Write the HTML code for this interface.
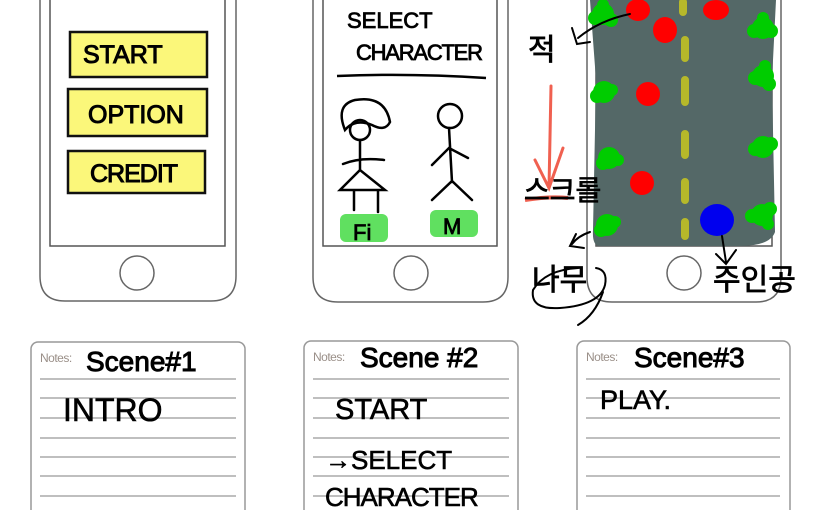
<!DOCTYPE html>
<html><head><meta charset="utf-8"><style>
html,body{margin:0;padding:0;background:#fff;}
svg{display:block}
.hw{font-family:"Liberation Sans","Noto Sans CJK KR",sans-serif;fill:#000;}
.ko{font-family:"Liberation Sans","Noto Sans CJK KR",sans-serif;}
</style></head><body>
<svg width="825" height="510" viewBox="0 0 825 510" xmlns="http://www.w3.org/2000/svg">
<g fill="none" stroke="#666" stroke-width="1.5">
  <path d="M40 0 V276 Q40 301 65 301 H211 Q236 301 236 276 V0"/>
  <path d="M50 0 V246 H225 V0" stroke="#555"/>
  <circle cx="137" cy="273" r="17"/>
  <path d="M313 0 V277 Q313 302 338 302 H483 Q508 302 508 277 V0"/>
  <path d="M323 0 V246 H497 V0" stroke="#555"/>
  <circle cx="411" cy="273" r="17"/>
  <path d="M587 0 V277 Q587 302 612 302 H756 Q781 302 781 277 V0"/>
  <path d="M596 0 V246 H772 V0" stroke="#555"/>
  <circle cx="684" cy="273" r="17"/>
</g>
<g stroke="#111" stroke-width="2.5" fill="#fbf77a">
  <rect x="70" y="32" width="137" height="45"/>
  <rect x="68" y="89" width="139" height="47"/>
  <rect x="68" y="151" width="137" height="42"/>
</g>
<g class="hw" font-size="25" stroke="#000" stroke-width="1">
  <text x="83" y="63">START</text>
  <text x="88" y="123">OPTION</text>
  <text x="90" y="182" letter-spacing="-1">CREDIT</text>
</g>
<g class="hw" font-size="22" stroke="#000" stroke-width="0.8">
  <text x="347" y="28">SELECT</text>
  <text x="356" y="60" letter-spacing="-1" textLength="126">CHARACTER</text>
</g>
<path d="M337 76 Q410 73 486 78" stroke="#000" stroke-width="2.5" fill="none"/>
<g stroke="#000" stroke-width="2.5" fill="none" stroke-linecap="round">
  <path d="M345 130 Q335 105 355 100 Q385 95 390 122 Q385 132 372 125 Q355 118 345 130 Z"/>
  <circle cx="360" cy="130" r="10"/>
  <path d="M360 140 V170 M343 164 Q360 157 384 160 M360 170 L340 190 H385 Z M354 190 V210 M378 190 V212"/>
  <circle cx="450" cy="116" r="12"/>
  <path d="M449 128 L452 182 M432 165 L449 148 L468 158 M432 200 L452 181 L472 200"/>
</g>
<rect x="340" y="214" width="48" height="28" rx="6" fill="#60e060"/>
<rect x="430" y="210" width="48" height="27" rx="6" fill="#60e060"/>
<g class="hw" font-size="22" stroke="#000" stroke-width="0.8"><text x="353" y="240">Fi</text><text x="443" y="234">M</text></g>
<path d="M590 0 H776 L772 80 L775 232 Q770 246 740 246 H600 Q592 246 593 230 L596 80 Z" fill="#546867"/>
<g stroke="#b6b82a" stroke-width="8" stroke-linecap="round">
  <path d="M683 2 V12 M685 40 V58 M685 80 V102 M685 134 V155 M685 182 V200 M685 222 V236"/>
</g>
<g fill="#ff0000">
  <ellipse cx="638" cy="10" rx="12" ry="11"/><ellipse cx="665" cy="30" rx="12" ry="13"/>
  <ellipse cx="716" cy="10" rx="13" ry="10"/><ellipse cx="648" cy="94" rx="12" ry="12"/>
  <ellipse cx="642" cy="183" rx="12" ry="12"/>
</g>
<ellipse cx="717" cy="220" rx="17" ry="16" fill="#0000ee"/>
<g fill="#00cc00">
  <g transform="translate(603,14)"><circle r="11"/><circle cx="-8" cy="4" r="7"/><circle cx="8" cy="6" r="7"/><circle cx="0" cy="-9" r="6"/></g>
  <g transform="translate(763,28)"><circle r="11"/><circle cx="-9" cy="3" r="7"/><circle cx="8" cy="3" r="7"/><circle cx="0" cy="-10" r="6"/></g>
  <g transform="translate(604,92)"><circle r="11"/><circle cx="-7" cy="4" r="7"/><circle cx="8" cy="-2" r="6"/></g>
  <g transform="translate(763,76)"><circle r="11"/><circle cx="-8" cy="2" r="7"/><circle cx="6" cy="8" r="7"/><circle cx="2" cy="-10" r="6"/></g>
  <g transform="translate(609,158)"><circle r="11"/><circle cx="-6" cy="5" r="7"/><circle cx="9" cy="2" r="6"/></g>
  <g transform="translate(763,147)"><circle r="11"/><circle cx="-8" cy="2" r="7"/><circle cx="8" cy="-3" r="7"/></g>
  <g transform="translate(607,225)"><circle r="11"/><circle cx="-6" cy="5" r="7"/><circle cx="8" cy="-3" r="6"/></g>
  <g transform="translate(762,215)"><circle r="11"/><circle cx="-10" cy="1" r="7"/><circle cx="8" cy="-6" r="7"/><circle cx="6" cy="9" r="6"/></g>
</g>
<g stroke="#000" stroke-width="2" fill="none" stroke-linecap="round">
  <path d="M630 14 Q600 20 578 38 M572 28 L577 44 L590 42"/>
  <path d="M590 232 Q578 236 572 244 M576 234 L570 246 L584 248"/>
  <path d="M722 236 L726 262 M716 254 L726 264 L736 250"/>
  <path d="M578 268 Q545 270 533 290 Q530 310 560 308 Q600 305 605 285 Q608 270 596 268 M603 292 Q595 315 578 325"/>
</g>
<path d="M551 86 L549 188 M535 160 L549 188 L563 148" stroke="#f06050" stroke-width="3" fill="none" stroke-linecap="round"/>
<path d="M525 200 Q550 196 568 198" stroke="#f06050" stroke-width="4" fill="none"/>
<g class="ko" font-size="30" fill="#000" stroke="#000" stroke-width="0.8">
  <text x="528" y="60">적</text>
  <text x="524" y="200" font-size="28">스크롤</text>
  <text x="532" y="290">나무</text>
  <text x="713" y="290">주인공</text>
</g>
<g>
  <rect x="31" y="342" width="214" height="180" rx="7" fill="#fff" stroke="#999" stroke-width="1.5"/>
  <rect x="304" y="341" width="214" height="180" rx="7" fill="#fff" stroke="#999" stroke-width="1.5"/>
  <rect x="577" y="341" width="213" height="180" rx="7" fill="#fff" stroke="#999" stroke-width="1.5"/>
</g>
<g stroke="#999" stroke-width="1.3">
  <path d="M40 379H236M40 398H236M40 418H236M40 438H236M40 457H236M40 476H236M40 496H236"/>
  <path d="M313 379H509M313 398H509M313 418H509M313 438H509M313 457H509M313 476H509M313 496H509"/>
  <path d="M586 379H780M586 398H780M586 418H780M586 438H780M586 457H780M586 476H780M586 496H780"/>
</g>
<g font-family="Liberation Sans,sans-serif" font-size="12" fill="#9a8f88" letter-spacing="-0.5">
  <text x="40" y="362">Notes:</text><text x="313" y="361">Notes:</text><text x="586" y="361">Notes:</text>
</g>
<g class="hw" font-size="28" stroke="#000" stroke-width="1">
  <text x="86" y="371">Scene#1</text>
  <text x="360" y="367">Scene #2</text>
  <text x="634" y="367">Scene#3</text>
  <text x="63" y="421" font-size="32" stroke-width="0.6">INTRO</text>
  <text x="335" y="419" font-size="29" stroke-width="0.6">START</text>
  <text x="325" y="469" font-size="26" stroke-width="0.6">→SELECT</text>
  <text x="325" y="506" font-size="26" letter-spacing="-1" stroke-width="0.6">CHARACTER</text>
  <text x="600" y="409" font-size="27" stroke-width="0.6">PLAY.</text>
</g>
</svg>
</body></html>
